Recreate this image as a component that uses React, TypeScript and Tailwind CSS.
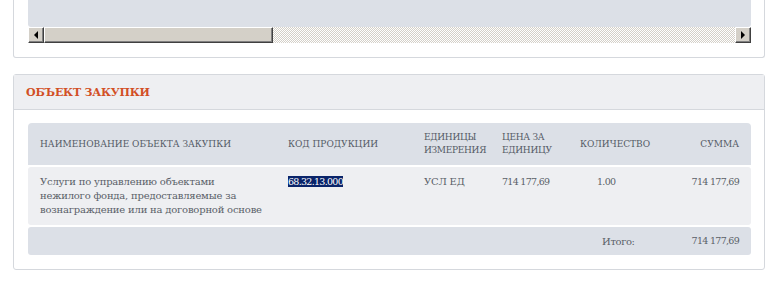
import React from "react";

const serif = "font-['DejaVu_Serif','Liberation_Serif',serif]";

function ScrollButton({ dir }: { dir: "left" | "right" }) {
  return (
    <div className="flex h-[16px] w-[16px] shrink-0 items-center justify-center border border-t-white border-l-white border-r-[#404040] border-b-[#404040] bg-[#d4d0c8] shadow-[inset_-1px_-1px_0_#808080]">
      <svg width="4" height="8" viewBox="0 0 4 8">
        {dir === "left" ? <path d="M4 0 L0 4 L4 8 Z" fill="#000" /> : <path d="M0 0 L4 4 L0 8 Z" fill="#000" />}
      </svg>
    </div>
  );
}

const num = "text-[9.5px] tracking-[-0.7px]";

export default function App() {
  return (
    <div className={`min-h-[283px] w-[771px] bg-white ${serif}`}>
      {/* previous card, tail end */}
      <div className="ml-[13px] mr-[6px] rounded-b-[3px] border-x border-b border-[#d5d8dd] pb-[14px] pl-[14px] pr-[13px]">
        <div className="h-[27px] rounded-b-[3px] bg-[#dce0e7]" />
        <div className="flex h-[16px]">
          <ScrollButton dir="left" />
          <div className="h-[16px] w-[229px] border border-t-white border-l-white border-r-[#404040] border-b-[#404040] bg-[#d4d0c8] shadow-[inset_-1px_-1px_0_#808080]" />
          <div className="h-[16px] flex-1 bg-[repeating-conic-gradient(#d4d0c8_0_25%,#ffffff_0_50%)] bg-[length:2px_2px]" />
          <ScrollButton dir="right" />
        </div>
      </div>

      {/* procurement object card */}
      <div className="ml-[13px] mr-[6px] mt-[16px] rounded-[3px] border border-[#d5d8dd]">
        <div className="flex h-[35px] items-center border-b border-[#d5d8dd] bg-[#eeeff2] pl-[12px] pt-[3px]">
          <span className="text-[11px] font-bold tracking-[-0.2px] text-[#d24f26]">ОБЪЕКТ ЗАКУПКИ</span>
        </div>
        <div className="flex flex-col gap-[2px] pb-[14px] pl-[14px] pr-[13px] pt-[13px] text-[9px] text-[#555b66]">
          <div className="grid h-[42px] grid-cols-[248px_136px_78px_78px_1fr_auto] items-center rounded-t-[4px] bg-[#dce0e7] px-[12px] leading-[13px] tracking-[0px]">
            <div>НАИМЕНОВАНИЕ ОБЪЕКТА ЗАКУПКИ</div>
            <div>КОД ПРОДУКЦИИ</div>
            <div className="tracking-[-0.3px]">
              ЕДИНИЦЫ
              <br />
              ИЗМЕРЕНИЯ
            </div>
            <div className="tracking-[-0.3px]">
              ЦЕНА ЗА
              <br />
              ЕДИНИЦУ
            </div>
            <div>КОЛИЧЕСТВО</div>
            <div className="text-right">СУММА</div>
          </div>
          <div className="grid h-[58px] grid-cols-[248px_136px_78px_78px_1fr_auto] items-start rounded-[3px] bg-[#eeeff2] px-[12px] pt-[8px] text-[10px] leading-[14px] tracking-[-0.2px] text-[#5a5f68]">
            <div>
              Услуги по управлению объектами
              <br />
              нежилого фонда, предоставляемые за
              <br />
              вознаграждение или на договорной основе
            </div>
            <div>
              <span className={`bg-[#0a246a] text-white ${num}`}>68.32.13.000</span>
            </div>
            <div>УСЛ ЕД</div>
            <div className={num}>714 177,69</div>
            <div className={`pl-[17px] ${num}`}>1.00</div>
            <div className={`text-right ${num}`}>714 177,69</div>
          </div>
          <div className="flex h-[28px] items-center justify-end rounded-[3px] bg-[#dce0e7] px-[12px] text-[10px] tracking-[-0.4px] text-[#5a5f68]">
            <span>Итого:</span>
            <span className={`ml-[57px] ${num}`}>714 177,69</span>
          </div>
        </div>
      </div>
    </div>
  );
}
